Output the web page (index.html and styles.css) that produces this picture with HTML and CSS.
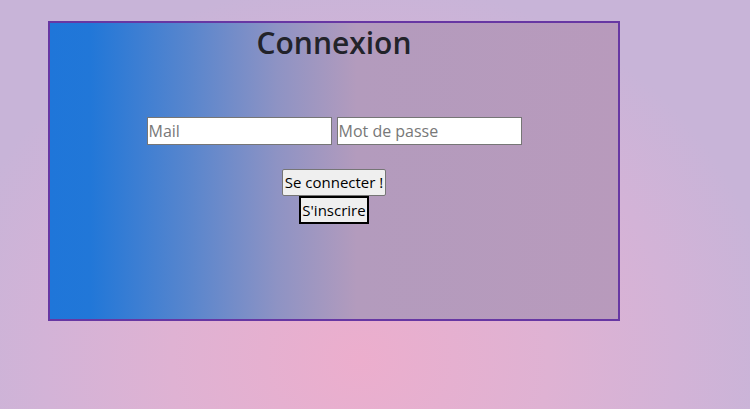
FILE: index.html
```html
<!DOCTYPE html>
<html lang="fr">
<head>
<meta charset="utf-8">
<title>Connexion</title>
<link rel="stylesheet" href="styles.css">
</head>
<body>
<div class="card">
  <h1 class="title">Connexion</h1>
  <form class="form">
    <div class="fields">
      <input class="field" type="text" placeholder="Mail">
      <input class="field" type="password" placeholder="Mot de passe">
    </div>
    <div class="actions">
      <button class="btn" type="button">Se connecter !</button>
      <button class="btn btn-alt" type="button">S'inscrire</button>
    </div>
  </form>
</div>
</body>
</html>
```
FILE: styles.css
```css
html, body {
  margin: 0;
  height: 100%;
}
body {
  background: radial-gradient(ellipse 420px 380px at 360px 360px, #ecaecd 0%, #dfb2d3 45%, #d3b3d7 75%, #c8b4d8 100%);
  font-family: "Open Sans", "Noto Sans", sans-serif;
  padding: 21px 0 0 48px;
  box-sizing: border-box;
}
.card {
  width: 572px;
  height: 300px;
  box-sizing: border-box;
  border: 2px solid #6737a3;
  background: linear-gradient(to right, #1f76d9 0%, #2177d8 7%, #5a86cd 25%, #8e93c4 40%, #b39bbd 54%, #b89abc 100%);
  display: flex;
  flex-direction: column;
  align-items: center;
}
.title {
  margin: 0;
  font-size: 30px;
  font-weight: 600;
  line-height: 40px;
  color: #22232a;
}
.form {
  display: flex;
  flex-direction: column;
  align-items: center;
  margin-top: 54px;
}
.fields {
  display: flex;
  gap: 5px;
}
.field {
  width: 185px;
  height: 28px;
  box-sizing: border-box;
  border: 1px solid #767676;
  padding: 0 1px;
  font-family: "Open Sans", "Noto Sans", sans-serif;
  font-size: 16px;
  background: #fff;
}
.field::placeholder {
  color: #787878;
}
.actions {
  display: flex;
  flex-direction: column;
  align-items: center;
  margin-top: 24px;
}
.btn {
  font-family: "Open Sans", "Noto Sans", sans-serif;
  font-size: 15px;
  line-height: 21px;
  padding: 2px 2px;
  height: 27px;
  box-sizing: border-box;
  border: 1px solid #767676;
  border-radius: 2px;
  background: #efefef;
  color: #000;
}
.btn-alt {
  border: 2px solid #000;
  border-radius: 0;
  height: 28px;
  padding: 1px 1px;
}
```
